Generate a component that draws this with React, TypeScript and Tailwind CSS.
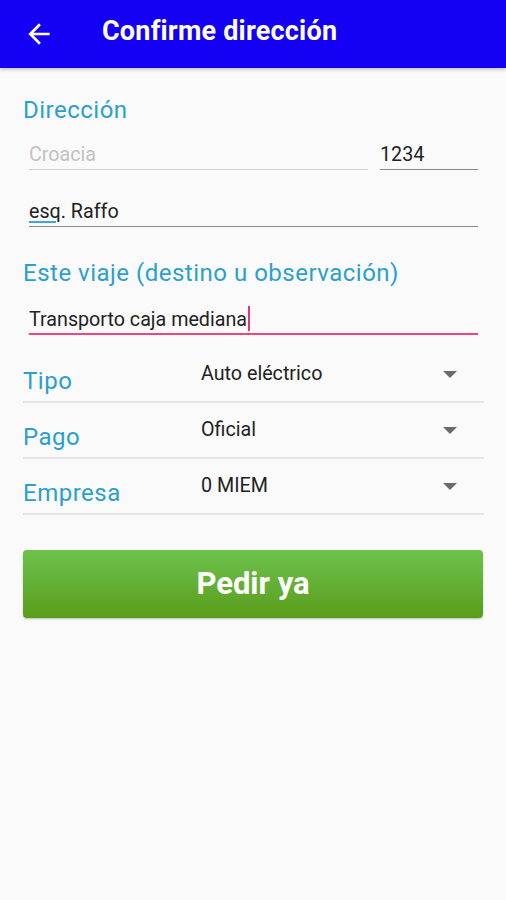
const selects = [
  { label: "Tipo", value: "Auto eléctrico" },
  { label: "Pago", value: "Oficial" },
  { label: "Empresa", value: "0 MIEM" },
];

const Caret = () => (
  <svg width="14" height="8" viewBox="0 0 14 8" className="mr-[27px]">
    <path d="M0 0 L14 0 L7 7 Z" fill="#6b6b6b" />
  </svg>
);

const BackArrow = () => (
  <svg width="32" height="32" viewBox="0 0 24 24" className="ml-[23px]">
    <path
      d="M20 11H7.83l5.59-5.59L12 4l-8 8 8 8 1.41-1.41L7.83 13H20v-2z"
      fill="#ffffff"
    />
  </svg>
);

export default function App() {
  return (
    <div
      className="w-[506px] h-[900px] bg-[#fafafa] flex flex-col"
      style={{ fontFamily: "Roboto, 'Noto Sans', sans-serif" }}
    >
      {/* Toolbar */}
      <div className="h-[68px] bg-[#1400f2] flex items-center shadow-[0_2px_3px_rgba(0,0,0,0.2)] shrink-0">
        <BackArrow />
        <h1 className="ml-[47px] text-white text-[27px] leading-[32px] font-bold tracking-[0.2px] -mt-[6px]">
          Confirme dirección
        </h1>
      </div>

      <div className="px-[23px] pt-[28px]">
        {/* Direccion */}
        <div className="text-[24px] leading-[28px] tracking-[0.5px] text-[#2a9fd0]">Dirección</div>

        <div className="flex gap-[12px] pl-[6px] pr-[5px] mt-[12px]">
          <div className="flex-1 h-[34px] flex items-end pb-[2px] border-b border-[#cfcfcf] text-[19.7px] leading-[24px] text-[#c2c2c2]">
            Croacia
          </div>
          <div className="w-[98px] h-[34px] flex items-end pb-[2px] border-b border-[#8a8a8a] text-[19.7px] leading-[24px] text-[#222]">
            1234
          </div>
        </div>

        <div className="pl-[6px] pr-[5px] mt-[23px]">
          <div className="h-[34px] flex items-end pb-[2px] border-b border-[#8a8a8a] text-[19.7px] leading-[24px] text-[#222]">
            <span className="underline decoration-[#3fa7e0] decoration-2 underline-offset-[3px]">esq</span>
            <span>. Raffo</span>
          </div>
        </div>

        {/* Este viaje */}
        <div className="text-[24px] leading-[28px] tracking-[0.5px] text-[#2a9fd0] mt-[32px]">
          Este viaje (destino u observación)
        </div>

        <div className="pl-[6px] pr-[5px] mt-[14px]">
          <div className="h-[34px] flex items-end pb-[1px] border-b-2 border-[#f0457a] text-[19.7px] leading-[24px] text-[#222]">
            <span>Transporto caja mediana</span>
            <span className="w-[2px] h-[25px] bg-[#e8336c] ml-[1px] mb-[1px]" />
          </div>
        </div>

        {/* Selectores */}
        <div className="mt-[12px]">
          {selects.map((s) => (
            <div key={s.label} className="h-[56px] flex border-b-2 border-[#e6e6e6] -mr-[1px]">
              <div className="w-[178px] pt-[20px] text-[24px] leading-[28px] tracking-[0.5px] text-[#2a9fd0]">
                {s.label}
              </div>
              <div className="flex-1 flex items-start justify-between pt-[15px]">
                <span className="text-[19.7px] leading-[24px] text-[#222]">{s.value}</span>
                <div className="pt-[9px]">
                  <Caret />
                </div>
              </div>
            </div>
          ))}
        </div>

        {/* Boton */}
        <button className="mt-[35px] w-full h-[68px] rounded-[4px] bg-gradient-to-b from-[#6dc24b] to-[#5a9d18] shadow-[0_1px_2px_rgba(0,0,0,0.25)] text-white text-[31px] font-bold">
          Pedir ya
        </button>
      </div>
    </div>
  );
}
